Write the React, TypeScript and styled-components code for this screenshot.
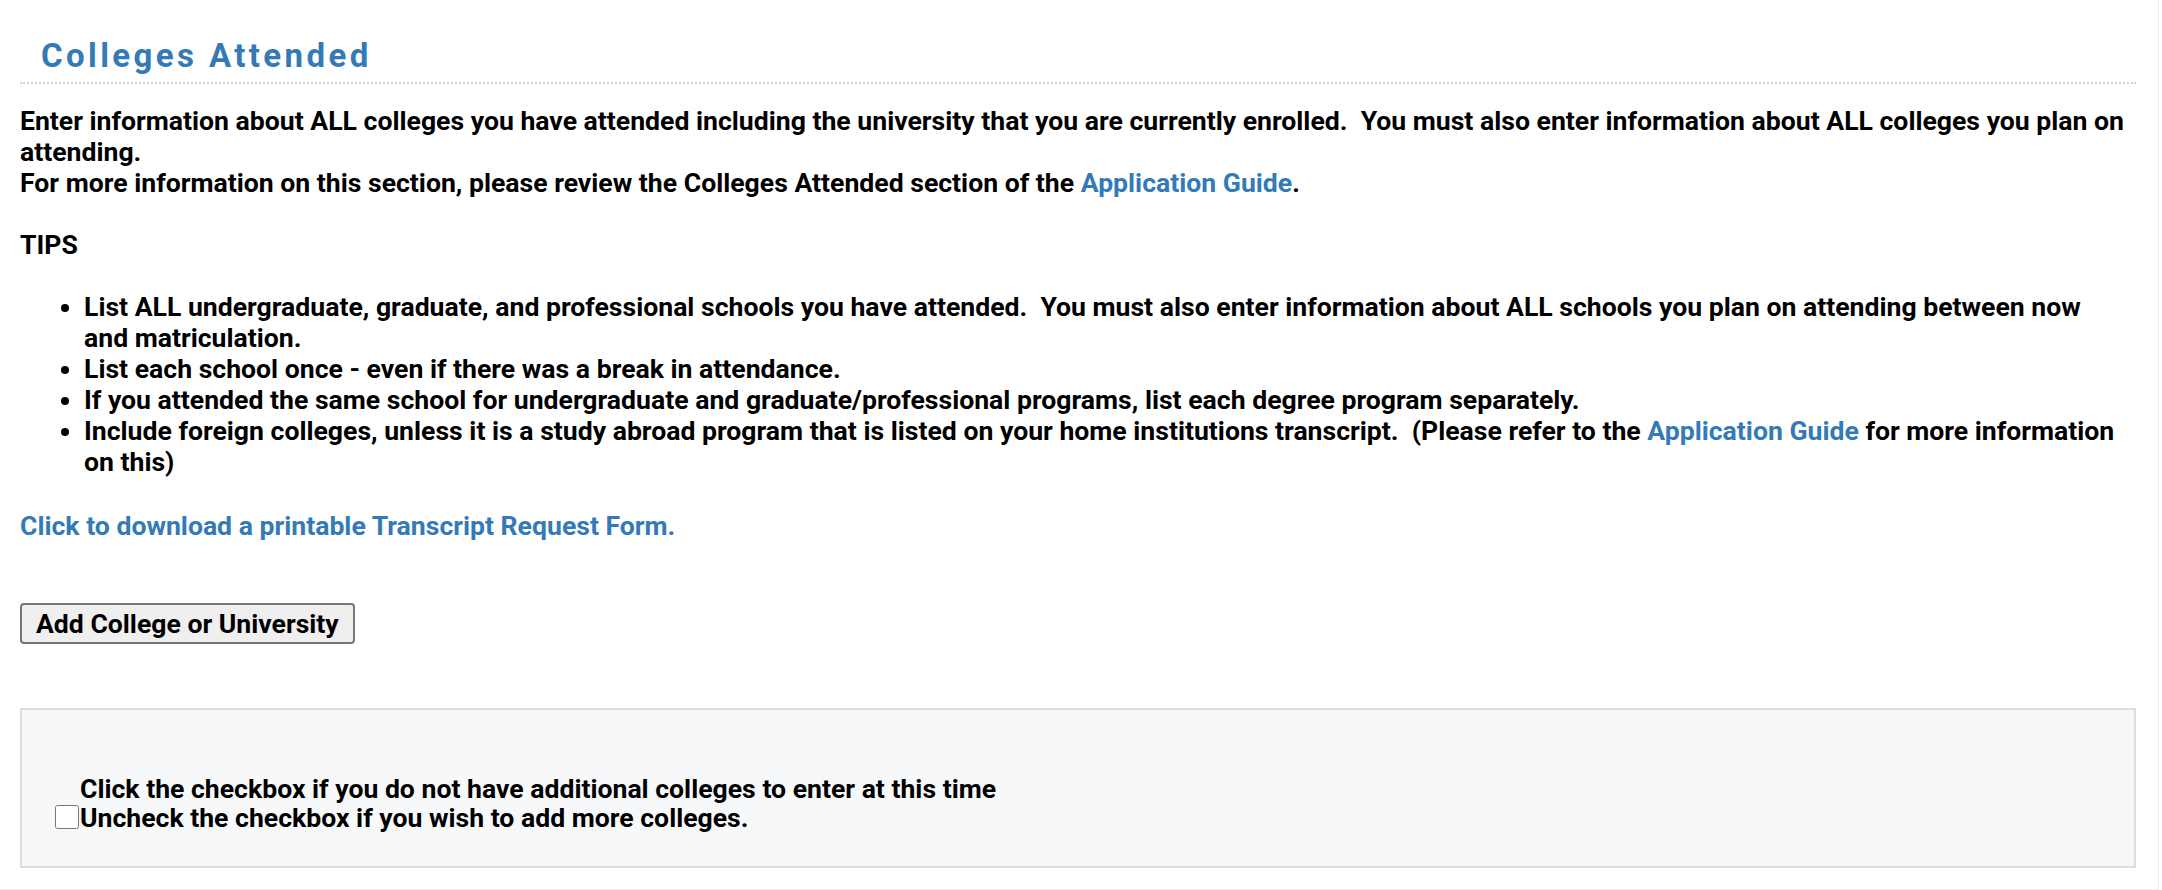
import React from "react";
import styled, { createGlobalStyle } from "styled-components";

const GlobalStyle = createGlobalStyle`
  html, body {
    margin: 0;
    padding: 0;
    background: #ffffff;
  }
  body {
    font-family: Roboto, "Liberation Sans", Arial, sans-serif;
    color: #000000;
  }
`;

const BODY_SIZE = "26.6px";

const Frame = styled.div`
  box-sizing: border-box;
  width: 2159px;
  height: 890px;
  border-right: 1px solid #ececec;
  border-bottom: 1px solid #ececec;
  padding: 37px 22px 0 20px;
`;

const SectionHeader = styled.h2`
  margin: 0;
  padding: 0 0 7px 21px;
  font-size: 33px;
  line-height: 38px;
  font-weight: 700;
  letter-spacing: 3.4px;
  color: #337ab7;
  border-bottom: 2px dotted #d9d3bd;
`;

const Intro = styled.div`
  margin-top: 21px;
  font-size: ${BODY_SIZE};
  line-height: 31px;
  font-weight: 700;
`;

const Link = styled.a`
  color: #337ab7;
  text-decoration: none;
  cursor: pointer;
`;

const TipList = styled.ul`
  margin: 31px 0 0;
  padding: 0 16px 0 64px;
  font-size: ${BODY_SIZE};
  line-height: 31px;
  font-weight: 700;
`;

const DownloadLink = styled(Link)`
  display: block;
  margin-top: 33px;
  font-size: ${BODY_SIZE};
  line-height: 31px;
  font-weight: 700;
`;

const AddButton = styled.button`
  display: block;
  margin-top: 62px;
  padding: 0 14px;
  height: 41px;
  font-family: Roboto, "Liberation Sans", Arial, sans-serif;
  font-size: ${BODY_SIZE};
  font-weight: 700;
  color: #000;
  background: #efefef;
  border: 2px solid #767676;
  border-radius: 4px;
`;

const NoMorePanel = styled.div`
  box-sizing: border-box;
  margin-top: 64px;
  height: 160px;
  padding: 64px 20px 0 33px;
  background: #f7f8fa;
  border: 2px solid #dcdce3;
`;

const Check = styled.input`
  width: 24px;
  height: 24px;
  margin: 0 1px 0 0;
  vertical-align: -2px;
`;

const CheckLabel = styled.label`
  display: inline-block;
  font-size: ${BODY_SIZE};
  line-height: 29px;
  font-weight: 700;
`;

export default function App() {
  return (
    <>
      <GlobalStyle />
      <Frame>
        <SectionHeader>Colleges Attended</SectionHeader>
        <Intro>
          Enter information about ALL colleges you have attended including the university that you are
          currently enrolled.&nbsp; You must also enter information about ALL colleges you plan on attending.
          <br />
          For more information on this section, please review the Colleges Attended section of the{" "}
          <Link>Application Guide</Link>.
          <br />
          <br />
          TIPS
        </Intro>
        <TipList>
          <li>
            List ALL undergraduate, graduate, and professional schools you have attended.&nbsp; You must also
            enter information about ALL schools you plan on attending between now and matriculation.
          </li>
          <li>List each school once - even if there was a break in attendance.</li>
          <li>
            If you attended the same school for undergraduate and graduate/professional programs, list each
            degree program separately.
          </li>
          <li>
            Include foreign colleges, unless it is a study abroad program that is listed on your home
            institutions transcript.&nbsp; (Please refer to the <Link>Application Guide</Link> for more
            information on this)
          </li>
        </TipList>
        <DownloadLink>Click to download a printable Transcript Request Form.</DownloadLink>
        <AddButton type="button">Add College or University</AddButton>
        <NoMorePanel>
          <Check type="checkbox" id="noMoreColleges" />
          <CheckLabel htmlFor="noMoreColleges">
            Click the checkbox if you do not have additional colleges to enter at this time
            <br />
            Uncheck the checkbox if you wish to add more colleges.
          </CheckLabel>
        </NoMorePanel>
      </Frame>
    </>
  );
}
